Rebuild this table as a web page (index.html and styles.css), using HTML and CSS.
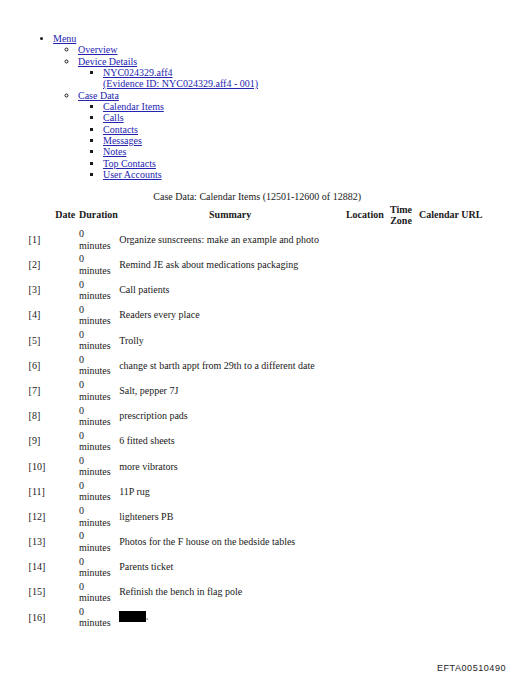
FILE: index.html
```html
<!DOCTYPE html>
<html>
<head>
<meta charset="utf-8">
<link rel="stylesheet" href="styles.css">
</head>
<body>
<div class="page">
<ul class="menu">
  <li><a href="#">Menu</a>
    <ul class="lvl2">
      <li><a href="#">Overview</a></li>
      <li><a href="#">Device Details</a>
        <ul class="lvl3">
          <li><a href="#">NYC024329.aff4<br>(Evidence ID: NYC024329.aff4 - 001)</a></li>
        </ul>
      </li>
      <li><a href="#">Case Data</a>
        <ul class="lvl3">
          <li><a href="#">Calendar Items</a></li>
          <li><a href="#">Calls</a></li>
          <li><a href="#">Contacts</a></li>
          <li><a href="#">Messages</a></li>
          <li><a href="#">Notes</a></li>
          <li><a href="#">Top Contacts</a></li>
          <li><a href="#">User Accounts</a></li>
        </ul>
      </li>
    </ul>
  </li>
</ul>
<table class="data">
  <caption>Case Data: Calendar Items (12501-12600 of 12882)</caption>
  <thead>
    <tr>
      <th class="c-idx"></th>
      <th class="c-date">Date</th>
      <th class="c-dur">Duration</th>
      <th class="c-sum">Summary</th>
      <th class="c-loc">Location</th>
      <th class="c-tz">Time Zone</th>
      <th class="c-url">Calendar URL</th>
    </tr>
  </thead>
  <tbody>
    <tr><td>[1]</td><td></td><td>0<br>minutes</td><td>Organize sunscreens: make an example and photo</td><td></td><td></td><td></td></tr>
    <tr><td>[2]</td><td></td><td>0<br>minutes</td><td>Remind JE ask about medications packaging</td><td></td><td></td><td></td></tr>
    <tr><td>[3]</td><td></td><td>0<br>minutes</td><td>Call patients</td><td></td><td></td><td></td></tr>
    <tr><td>[4]</td><td></td><td>0<br>minutes</td><td>Readers every place</td><td></td><td></td><td></td></tr>
    <tr><td>[5]</td><td></td><td>0<br>minutes</td><td>Trolly</td><td></td><td></td><td></td></tr>
    <tr><td>[6]</td><td></td><td>0<br>minutes</td><td>change st barth appt from 29th to a different date</td><td></td><td></td><td></td></tr>
    <tr><td>[7]</td><td></td><td>0<br>minutes</td><td>Salt, pepper 7J</td><td></td><td></td><td></td></tr>
    <tr><td>[8]</td><td></td><td>0<br>minutes</td><td>prescription pads</td><td></td><td></td><td></td></tr>
    <tr><td>[9]</td><td></td><td>0<br>minutes</td><td>6 fitted sheets</td><td></td><td></td><td></td></tr>
    <tr><td>[10]</td><td></td><td>0<br>minutes</td><td>more vibrators</td><td></td><td></td><td></td></tr>
    <tr><td>[11]</td><td></td><td>0<br>minutes</td><td>11P rug</td><td></td><td></td><td></td></tr>
    <tr><td>[12]</td><td></td><td>0<br>minutes</td><td>lighteners PB</td><td></td><td></td><td></td></tr>
    <tr><td>[13]</td><td></td><td>0<br>minutes</td><td>Photos for the F house on the bedside tables</td><td></td><td></td><td></td></tr>
    <tr><td>[14]</td><td></td><td>0<br>minutes</td><td>Parents ticket</td><td></td><td></td><td></td></tr>
    <tr><td>[15]</td><td></td><td>0<br>minutes</td><td>Refinish the bench in flag pole</td><td></td><td></td><td></td></tr>
    <tr><td>[16]</td><td></td><td>0<br>minutes</td><td><span class="redact"></span><span class="tail">s</span></td><td></td><td></td><td></td></tr>
  </tbody>
</table>
</div>
<div class="stamp">EFTA00510490</div>
</body>
</html>
```
FILE: styles.css
```css
html, body {
  margin: 0;
  padding: 0;
  background: #ffffff;
}
body {
  font-family: "Liberation Serif", "Times New Roman", serif;
  font-size: 10px;
  line-height: 11.33px;
  color: #1a1a1a;
  width: 512px;
  height: 678px;
  position: relative;
  overflow: hidden;
}
.page {
  padding: 33px 0 0 28px;
}
a {
  color: #2424b0;
  text-decoration: underline;
}
.menu {
  margin: 0 0 11px 0;
  padding: 0 0 0 25px;
  list-style-type: disc;
}
.menu ul {
  margin: 0;
  padding: 0 0 0 25px;
}
.lvl2 {
  list-style-type: circle;
}
.lvl3 {
  list-style-type: square;
}
.data {
  border-collapse: separate;
  border-spacing: 1.25px;
  table-layout: fixed;
  width: 457px;
  margin-left: -1px;
}
.data caption {
  text-align: center;
  padding: 0;
}
.data th {
  font-weight: bold;
  padding: 0.1px 0.6px;
  text-align: center;
  vertical-align: middle;
}
.data td {
  padding: 0.78px 0.6px;
  vertical-align: middle;
  text-align: left;
}
.c-idx { width: 23px; }
.c-date { width: 23px; }
.c-dur { width: 38px; }
.c-sum { width: 222px; }
.c-loc { width: 43px; }
.c-tz { width: 25px; }
.c-url { width: 70px; }
.redact {
  display: inline-block;
  width: 27px;
  height: 11px;
  background: #000;
  vertical-align: -2px;
}
.tail {
  font-size: 5px;
}
.stamp {
  position: absolute;
  right: 6px;
  bottom: 5px;
  font-family: "Liberation Sans", Arial, sans-serif;
  font-size: 9px;
  line-height: 10px;
  letter-spacing: 0.55px;
  color: #222;
}
```
